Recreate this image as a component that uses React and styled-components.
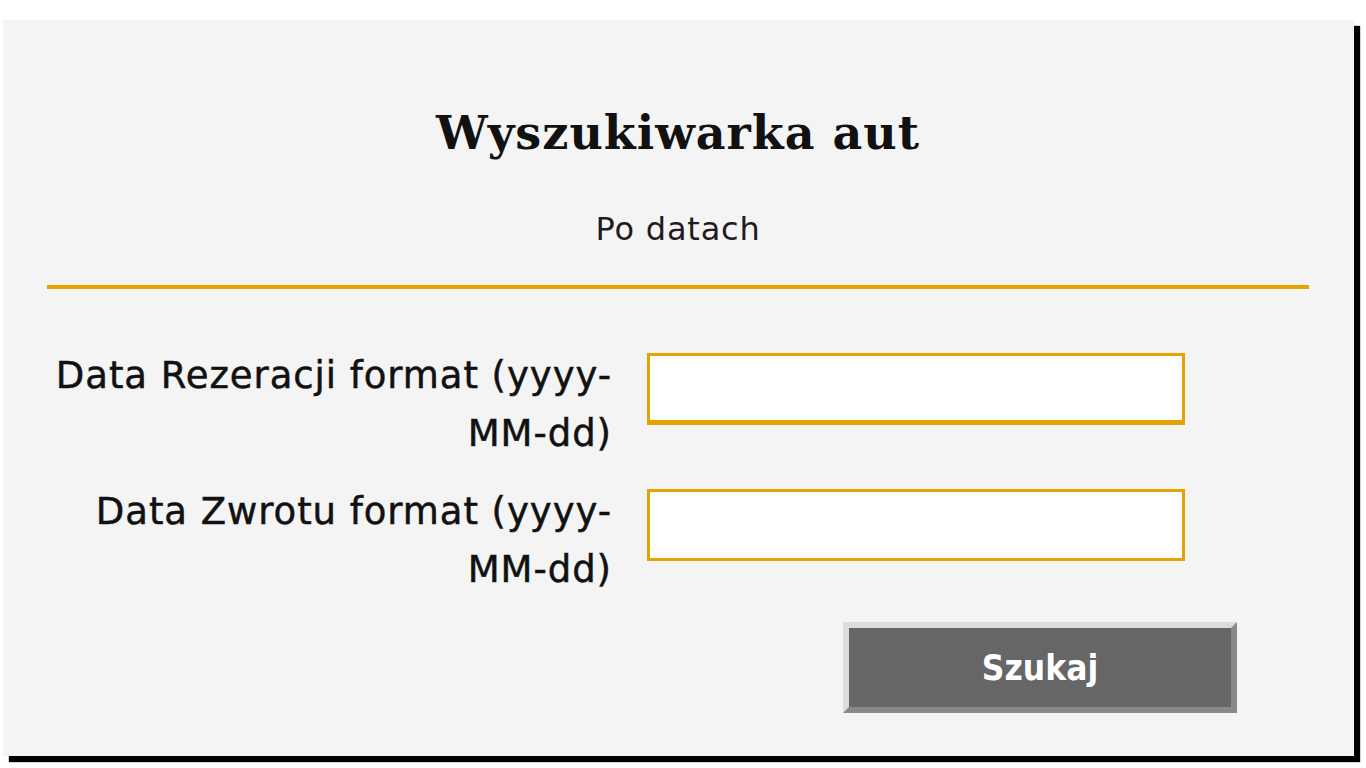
import React from 'react'
import styled, { createGlobalStyle } from 'styled-components'

const GlobalStyle = createGlobalStyle`
    html, body {
        margin: 0;
        padding: 0;
        background-color: #ffffff;
        overflow: hidden;
    }
`

const fields = [
    { id: 'od', label: 'Data Rezeracji format (yyyy-MM-dd)', thick: true },
    { id: 'do', label: 'Data Zwrotu format (yyyy-MM-dd)' }
]

const App = () => {
    return(
        <Page>
            <GlobalStyle />
            <Card>
                <Title>Wyszukiwarka aut</Title>
                <Subtitle>Po datach</Subtitle>
                <Divider />

                <Form>
                    {fields.map(field => (
                        <Row key={field.id}>
                            <Label htmlFor={field.id}>{field.label}</Label>
                            <Input id={field.id} type="text" $thick={field.thick} />
                        </Row>
                    ))}
                </Form>

                <Actions>
                    <Button type="button">Szukaj</Button>
                </Actions>
            </Card>
        </Page>
    )
}

export default App

const Page = styled.div`
    width: 1366px;
    height: 768px;
    padding: 20px 0 0 3px;
    box-sizing: border-box;
`
const Card = styled.div`
    width: 1351px;
    height: 736px;
    box-sizing: border-box;
    padding: 87px 45px 0 44px;
    background-color: #f4f4f4;
    box-shadow: 6px 6px 1px #000000;
`
const Title = styled.h1`
    margin: 0;
    font-family: 'DejaVu Serif', 'Liberation Serif', serif;
    font-size: 46px;
    font-weight: bold;
    letter-spacing: 1px;
    line-height: 52px;
    text-align: center;
    color: #111111;
`
const Subtitle = styled.p`
    margin: 50px 0 0 0;
    font-family: 'DejaVu Sans', Verdana, sans-serif;
    font-size: 32px;
    letter-spacing: 0.8px;
    line-height: 40px;
    text-align: center;
    color: #221a22;
`
const Divider = styled.hr`
    margin: 36px 0 0 0;
    border: none;
    height: 4px;
    background-color: #e5a300;
`
const Form = styled.div`
    display: flex;
    flex-direction: column;
    gap: 20px;
    margin-top: 58px;
`
const Row = styled.div`
    display: grid;
    grid-template-columns: 565px 538px;
    column-gap: 35px;
    align-items: start;
`
const Label = styled.label`
    font-family: 'DejaVu Sans', Verdana, sans-serif;
    font-size: 37px;
    letter-spacing: 0.95px;
    line-height: 58px;
    text-align: right;
    color: #111111;
    -webkit-text-stroke: 0.5px #111111;
`
const Input = styled.input`
    margin-top: 6px;
    height: 72px;
    box-sizing: border-box;
    background-color: #ffffff;
    border: 3px solid #e5a300;
    border-bottom-width: ${props => props.$thick ? '5px' : '3px'};
    border-radius: 0;
    padding: 0 10px;
    font-size: 28px;
    outline: none;
`
const Actions = styled.div`
    display: flex;
    justify-content: flex-end;
    padding-right: 72px;
    margin-top: 23px;
`
const Button = styled.button`
    width: 394px;
    height: 91px;
    box-sizing: border-box;
    background-color: #666666;
    border: 6px solid;
    border-color: #dcdcdc #888888 #888888 #dcdcdc;
    color: #ffffff;
    font-family: 'DejaVu Sans Condensed', 'DejaVu Sans', sans-serif;
    font-size: 35px;
    font-weight: bold;
    cursor: pointer;
`
